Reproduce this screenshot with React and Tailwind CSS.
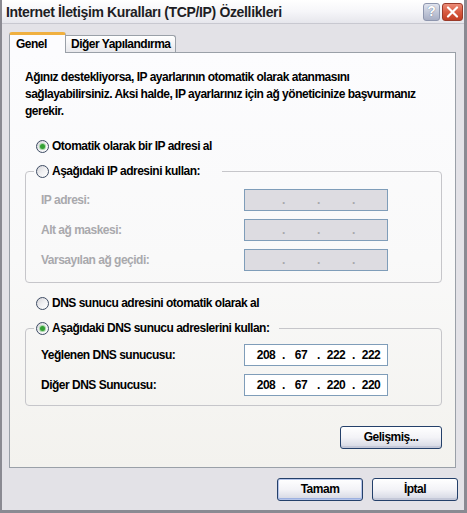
import React from "react";

const F = "font-['Liberation_Sans',Arial,sans-serif]";

function Radio({ checked }) {
  return (
    <span className="w-[13px] h-[13px] rounded-full border border-[#3d4b63] bg-linear-to-br from-[#d4d4d8] via-[#f0f0f2] to-white flex items-center justify-center shrink-0">
      {checked && (
        <span className="w-[5px] h-[5px] rounded-full bg-[#34a034] shadow-[0_0_0_1px_#a8d8a8]" />
      )}
    </span>
  );
}

function RadioLabel({ checked, children }) {
  return (
    <span className="flex items-center h-[17px] gap-[3px]">
      <Radio checked={checked} />
      <span>{children}</span>
    </span>
  );
}

function IpBox({ values, disabled }) {
  const segs = values || ["", "", "", ""];
  return (
    <div
      className={`w-[144px] h-[22px] border border-[#7f9db9] flex items-center pl-[6px] ${
        disabled ? "bg-[#dddce1] text-[#a8a8ac]" : "bg-white text-black"
      }`}
    >
      {segs.map((v, i) => (
        <React.Fragment key={i}>
          <span className="w-[30px] text-center">{v}</span>
          {i < 3 && <span className="w-[5px] text-center">.</span>}
        </React.Fragment>
      ))}
    </div>
  );
}

function Btn({ children, def, className = "" }) {
  return (
    <button
      className={`h-[23px] rounded-[3px] border border-[#24406a] bg-linear-to-b from-white via-[#f3f3f7] to-[#d3d6e2] flex items-center justify-center text-black ${
        def
          ? "shadow-[inset_0_0_0_1px_#b4c4ea,inset_0_-2px_0_#9db1e0]"
          : "shadow-[inset_0_-2px_0_#c4c8d8]"
      } ${className}`}
    >
      {children}
    </button>
  );
}

function Row({ label, children, disabled }) {
  return (
    <div className="grid grid-cols-[203px_144px] items-center">
      <span className={disabled ? "text-[#a9a9ad]" : "text-black"}>{label}</span>
      {children}
    </div>
  );
}

export default function App() {
  return (
    <div
      className={`${F} w-[467px] h-[513px] bg-[#e3e2e7] border-l-2 border-r-[3px] border-b-[3px] border-[#8a8a92] flex flex-col text-[12px] font-bold tracking-[-0.5px] leading-[17px] text-black overflow-hidden`}
    >
      {/* Title bar */}
      <div className="h-[24px] shrink-0 flex items-center justify-between pl-[4px] pr-[1px] bg-linear-to-b from-white via-[#f6f6f9] to-[#e6e6ec] border-b border-[#c8c8d0]">
        <span className="text-[14px] tracking-[-0.35px] text-[#1e1e24] pt-[1px]">
          Internet İletişim Kuralları (TCP/IP) Özellikleri
        </span>
        <div className="flex items-center gap-[2px]">
          <div className="w-[17px] h-[18px] rounded-[3px] border border-[#8e96ae] bg-linear-to-b from-[#dfe3ee] to-[#a7aec4] flex items-center justify-center text-white text-[14px] tracking-normal [text-shadow:0_0_1px_#4a5470]">
            ?
          </div>
          <div className="w-[21px] h-[18px] rounded-[3px] border border-[#9a3a2a] bg-linear-to-b from-[#ec8c78] via-[#d85a40] to-[#c23e24] flex items-center justify-center">
            <svg width="13" height="12" viewBox="0 0 13 12">
              <path d="M2 1.5 L11 10.5 M11 1.5 L2 10.5" stroke="white" strokeWidth="2.2" strokeLinecap="round" />
            </svg>
          </div>
        </div>
      </div>

      {/* Body */}
      <div className="flex flex-col pl-[7px] pr-[8px] pt-[8px]">
        {/* Tabs */}
        <div className="flex items-end h-[20px]">
          <div className="relative z-10 w-[57px] h-[21px] -mb-px bg-[#fcfcfe] border-x border-[#9aa0a8] rounded-t-[3px] border-t-[3px] border-t-[#f0b040] pl-[6px] flex items-center text-black">
            Genel
          </div>
          <div className="w-[110px] h-[17px] bg-linear-to-b from-white to-[#e8e8ec] border-t border-r border-[#9aa0a8] rounded-tr-[3px] pl-[5px] flex items-center">
            Diğer Yapılandırma
          </div>
        </div>

        {/* Panel */}
        <div className="h-[416px] border border-[#9aa0a8] bg-linear-to-b from-[#fcfcfe] via-[#f9f9f9] to-[#f3f2ee] pl-[15px] pr-[13px] pt-[16px] flex flex-col">
          <p className="w-[400px]">
            Ağınız destekliyorsa, IP ayarlarının otomatik olarak atanmasını sağlayabilirsiniz. Aksi halde, IP ayarlarınız için ağ yöneticinize başvurmanız gerekir.
          </p>

          <div className="ml-[11px] mt-[18px]">
            <RadioLabel checked>Otomatik olarak bir IP adresi al</RadioLabel>
          </div>

          <fieldset className="mt-[8px] border border-[#c6c6ca] rounded-[4px] pl-[8px] pb-[11px]">
            <legend className="pl-[2px] pr-[22px]">
              <RadioLabel>Aşağıdaki IP adresini kullan:</RadioLabel>
            </legend>
            <div className="ml-[7px] mt-[9px] flex flex-col gap-[8px]">
              <Row label="IP adresi:" disabled>
                <IpBox disabled />
              </Row>
              <Row label="Alt ağ maskesi:" disabled>
                <IpBox disabled />
              </Row>
              <Row label="Varsayılan ağ geçidi:" disabled>
                <IpBox disabled />
              </Row>
            </div>
          </fieldset>

          <div className="ml-[11px] mt-[12px]">
            <RadioLabel>DNS sunucu adresini otomatik olarak al</RadioLabel>
          </div>

          <fieldset className="mt-[8px] border border-[#c6c6ca] rounded-[4px] pl-[8px] pb-[9px]">
            <legend className="pl-[2px] pr-[10px]">
              <RadioLabel checked>Aşağıdaki DNS sunucu adreslerini kullan:</RadioLabel>
            </legend>
            <div className="ml-[7px] mt-[7px] flex flex-col gap-[8px]">
              <Row label="Yeğlenen DNS sunucusu:">
                <IpBox values={["208", "67", "222", "222"]} />
              </Row>
              <Row label="Diğer DNS Sunucusu:">
                <IpBox values={["208", "67", "220", "220"]} />
              </Row>
            </div>
          </fieldset>

          <div className="flex justify-end mt-[20px]">
            <Btn className="w-[102px]">Gelişmiş...</Btn>
          </div>
        </div>

        {/* Bottom buttons */}
        <div className="flex justify-end gap-[9px] mt-[10px] -mr-[2px]">
          <Btn def className="w-[86px]">Tamam</Btn>
          <Btn className="w-[86px]">İptal</Btn>
        </div>
      </div>
    </div>
  );
}
